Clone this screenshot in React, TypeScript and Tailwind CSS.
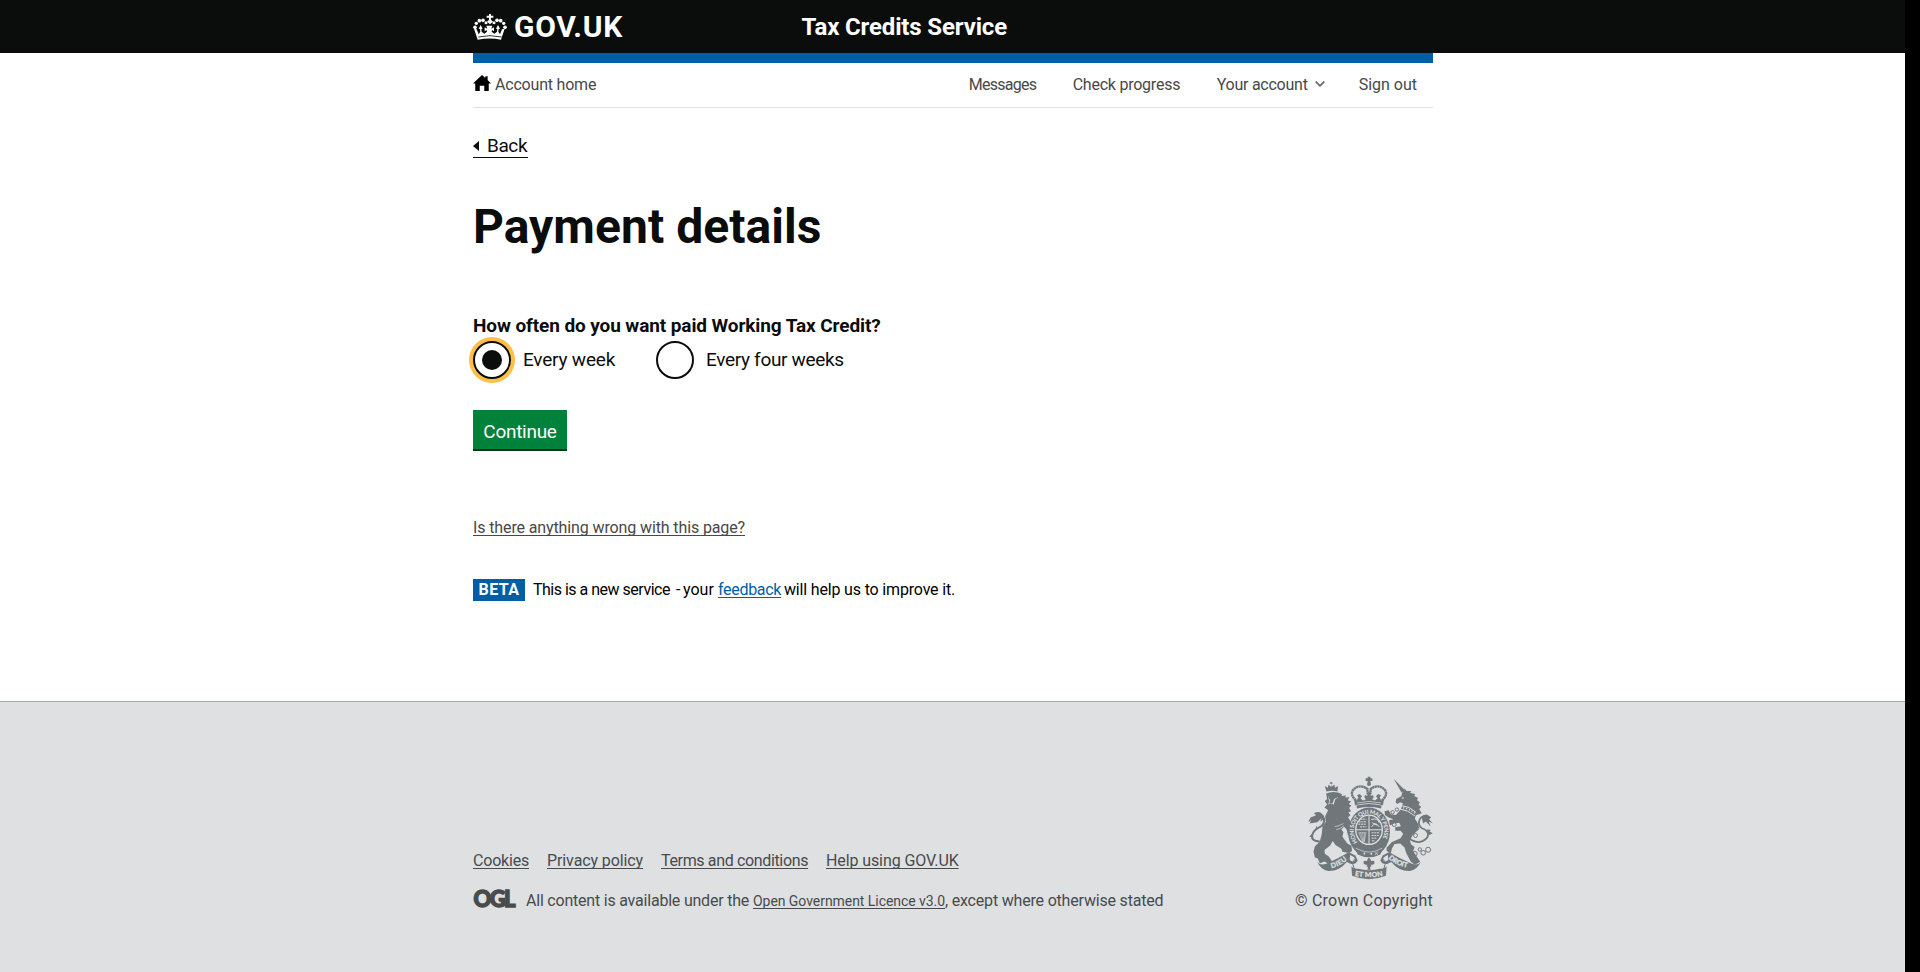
import React from "react";

const link =
  "underline decoration-1 underline-offset-[2px] [text-decoration-skip-ink:none]";

function Crown() {
  const dots: [number, number, number][] = [
    [6, 40, 5.5],
    [10, 28, 5],
    [19, 20, 5.5],
    [30, 19, 5.5],
    [39, 26, 4.5],
  ];
  return (
    <svg viewBox="0 0 102 78" className="block h-[26px] w-[34px] shrink-0" fill="#fff">
      {dots.map(([x, y, r]) => (
        <g key={x}>
          <circle cx={x} cy={y} r={r} />
          <circle cx={102 - x} cy={y} r={r} />
        </g>
      ))}
      <path d="M48 0h6v5h7v6h-7v6l6 6-9 8-9-8 6-6v-6h-7V5h7z" />
      <path d="M3 44l8 2 6 15 5-8-1-8-4-1 6-11 6 11-4 1 1 8 8 6 8-6-1-5-6 4v-12l8 4-3-9h18l-3 9 8-4v12l-6-4-1 5 8 6 8-6 1-8-4-1 6-11 6 11-4 1-1 8 5 8 6-15 8-2-11 33Q51 70 14 77z" />
      <path d="M16 69Q51 61 86 69" fill="none" stroke="#0b0c0c" strokeWidth="2.5" />
    </svg>
  );
}

function Crest() {
  const bg = "#dee0e2";
  const ink = "#6f777b";
  return (
    <svg
      viewBox="84 36 375 307"
      className="block h-[102px] w-[125px] overflow-visible"
      fill={ink}
      fontFamily="Lato, sans-serif"
      fontWeight="900"
    >
      {/* lion */}
      <path d="M139 80l-5-17 9 5 2-9 8 6v-8l-5-2 5-5 5 5-4 2v8l9-6 2 9 9-5-2 17q-17-5-33 0z" />
      <path d="M138 86Q155 78 174 83L186 88 184 93 198 92 195 98 208 97 203 106 213 110 206 117 214 122 207 129 213 139 205 142 211 151 204 157 214 174 222 190 224 203 214 200 216 212 203 210 200 195 192 186 184 194 190 202 187 216 202 236 214 243 216 259 207 265 187 261 184 252 166 241 158 229 150 242 133 256 134 267 146 275 156 290 145 296 132 290 119 296 113 281 104 278 100 260 104 245 119 230 125 207 127 185 137 171 135 154 144 136 133 128 141 119 134 108 141 102z" />
      <path d="M143 95l10 3 4 6 7-6 11-2-10 8-4 15-10-3-8 3 5-9z" fill={bg} />
      <path d="M144 97q7-5 13 3l9-6 7 3-11 5-5 14-9 0 2-11z" />
      <path d="M190 176q-15 9-26 9m27-2q-9 9-23 12" fill="none" stroke={bg} strokeWidth="2" />
      <path d="M119 230Q92 229 96 211 100 195 124 184 139 169 126 151" fill="none" stroke={ink} strokeWidth="6" />
      <path d="M130 153Q120 135 101 145L108 151 91 158 84 172 93 166 88 176 111 172 125 160 119 171 132 163z" />
      <path d="M96 207l-9 8 11 3zM111 190l-1-8-5 12z" />
      {/* unicorn */}
      <path d="M341 41l24 42 11-6z" />
      <path d="M367 83L375 71 380 78 394 78 391 84 406 87 403 93 415 99 411 105 420 112 416 119 424 126 418 132 426 145 408 151 405 162 417 180 413 197 397 213 390 228 394 239 404 247 400 259 409 273 421 291 405 300 393 291 379 265 374 248 361 236 344 238 336 251 333 265 320 259 320 249 336 232 362 220 370 207 362 198 346 198 346 187 363 184 358 174 344 175 330 182 327 166 341 163 326 158 315 150 314 139 326 136 333 148 348 150 356 141 363 132 369 115 360 112 353 117 347 112 349 102 364 94z" />
      <path d="M359 132q25 3 46 21m-42-31q25 1 45 20" fill="none" stroke={bg} strokeWidth="3" />
      <path d="M361 128q25 1 46 18" fill="none" stroke={bg} strokeWidth="5" strokeDasharray="3 6" />
      <path d="M364 99l8-3-2 6z" fill={bg} />
      <path d="M388 222Q409 237 428 229 448 220 444 205 441 195 426 190 412 180 420 163 427 151 438 154" fill="none" stroke={ink} strokeWidth="5" />
      <path d="M427 164Q423 150 441 149L454 157 448 163 459 176 447 170 452 185 438 170 430 176z" />
      <path d="M441 194l12 1-4 5 10 5-12 6z" />
      <g fill="none" stroke={ink} strokeWidth="3">
        <circle cx="351" cy="134" r="5" />
        <circle cx="338" cy="142" r="5" />
        <circle cx="343" cy="179" r="6" />
        <circle cx="411" cy="190" r="6" />
        <circle cx="407" cy="212" r="6" />
        <circle cx="390" cy="254" r="6" />
        <circle cx="405" cy="267" r="7" />
        <circle cx="420" cy="254" r="5" />
        <circle cx="430" cy="264" r="7" />
        <circle cx="445" cy="255" r="7.5" />
      </g>
      {/* royal crown */}
      <circle cx="267" cy="57" r="6" />
      <path d="M263 35h8v5h6v8h-6v5h-8v-5h-6v-8h6z" />
      <path d="M228 107Q208 88 220 74 239 55 262 72L263 88M306 107Q326 88 314 74 295 55 272 72L271 88" fill="none" stroke={ink} strokeWidth="7" strokeDasharray="7 1" />
      <path d="M225 121l-3-18 8 4 5-9-4-7 8-4 7 7-5 6 8 7 9-4-5-5 2-8 7 3v-8l5-5 5 5v8l7-3 2 8-5 5 9 4 8-7-5-6 7-7 8 4-4 7 5 9 8-4-3 18q-42-12-84 0z" />
      <path d="M231 114q36-9 72 0" fill="none" stroke={bg} strokeWidth="2" />
      <path d="M229 122q38-10 76 0l-2 9q-36-9-72 0z" />
      {/* garter and shield */}
      <ellipse cx="267" cy="202" rx="63" ry="74" />
      <ellipse cx="267" cy="195" rx="42" ry="46" fill={bg} />
      <ellipse cx="267" cy="195" rx="38" ry="42" />
      <path id="garter-arc" d="M233 232A46 51 0 1 1 301 232" fill="none" />
      <text fontSize="17" fill={bg}>
        <textPath href="#garter-arc" textLength="212">HONI SOIT QUI MAL Y PENSE</textPath>
      </text>
      <path d="M267 151v88M228 195h78" stroke={bg} strokeWidth="3" />
      <path d="M236 171h23m-24 7h24m-18-15h18m-19 23h19m16 18h23m-23 8h21m-21 8h16m-15 8h9" stroke={bg} strokeWidth="3" strokeDasharray="6 2" />
      <path d="M274 164q20-6 24 10m-23 12q11-18 23 0m-21-12l15 7" fill="none" stroke={bg} strokeWidth="3" />
      <path d="M236 202l12 30m-7-30l9 30m-3-30l5 30m1-30l0 30m5-30l-5 27M236 204h22" stroke={bg} strokeWidth="1.6" />
      <path d="M225 252q42 24 84 0l-8 17q-34 17-68 0z" />
      <path d="M227 250q40 24 80 0" fill="none" stroke={bg} strokeWidth="2" />
      <circle cx="253" cy="266" r="3" fill={bg} />
      <circle cx="274" cy="267" r="3" fill={bg} />
      <path d="M284 262l10 8m0-10l-9 11" stroke={bg} strokeWidth="2" />
      {/* motto ribbon */}
      <path d="M111 291Q120 304 138 297 180 279 206 262L226 272 233 287Q227 300 211 297L200 292Q178 320 144 319 122 315 111 291z" />
      <path d="M423 291Q414 304 396 297 354 279 328 262L308 272 301 287Q307 300 323 297L334 292Q356 320 390 319 412 315 423 291z" />
      <path d="M210 271Q228 278 224 288 218 293 209 286M324 271Q306 278 310 288 316 293 325 286" fill={bg} />
      <path d="M214 305Q219 313 234 312 267 321 300 312 315 313 320 305L318 333Q267 354 216 333z" />
      <path d="M223 283Q214 300 223 314M311 283Q320 300 311 314" fill="none" stroke={ink} strokeWidth="3" />
      <path id="ribbon-left" d="M154 310Q182 305 204 282" fill="none" />
      <path id="ribbon-mid" d="M224 333Q267 342 311 333" fill="none" />
      <path id="ribbon-right" d="M325 281Q350 305 386 309" fill="none" />
      <g fontSize="21" fill={bg} stroke={bg} strokeWidth="0.6">
        <text><textPath href="#ribbon-left" textLength="54">DIEU</textPath></text>
        <text><textPath href="#ribbon-mid" textLength="85">ET MON</textPath></text>
        <text><textPath href="#ribbon-right" textLength="64">DROIT</textPath></text>
      </g>
      {/* fleur */}
      <path d="M267 278q11 11 3 19 1-12 12-8 5 9-5 11h-5l3 5-5 2 2 8h-10l2-8-5-2 3-5h-5q-10-2-5-11 11-4 12 8-8-8 3-19z" />
    </svg>
  );
}

function Header() {
  return (
    <header className="flex h-[53px] shrink-0 bg-[#0b0c0c] pl-[473px] text-white">
      <div className="flex w-[960px] items-center">
        <a className="flex w-[328.5px] shrink-0 items-center">
          <Crown />
          <span className="ml-[7px] text-[30px] leading-[30px] font-bold tracking-[0.7px]">
            GOV.UK
          </span>
        </a>
        <span className="text-[24px] leading-[30px] font-bold tracking-[-0.15px] whitespace-nowrap">
          Tax Credits Service
        </span>
      </div>
    </header>
  );
}

function AccountNav() {
  return (
    <nav className="flex h-[55px] items-center border-t-[10px] border-b border-t-[#005ea5] border-b-[#dee0e2] text-[16px] whitespace-nowrap text-[#484848]">
      <svg viewBox="0 0 16 15" preserveAspectRatio="none" className="mb-1 h-4 w-[18px]" fill="#000">
        <path d="M8 0l3 2.8V1.2h2v3.5L16 8h-2v7h-4v-5H6v5H2V8H0z" />
      </svg>
      <span className="ml-1 tracking-[-0.2px]">Account home</span>
      <div className="mr-4 ml-auto flex items-center">
        <span className="w-[104px] tracking-[-0.72px]">Messages</span>
        <span className="w-[144px] tracking-[-0.23px]">Check progress</span>
        <span className="flex w-[142px] items-center tracking-[-0.24px]">
          Your account
          <svg viewBox="0 0 10 6" className="mb-[3px] ml-[7px] h-[6px] w-[10px]" fill="none" stroke="#6b6b6b" strokeWidth="1.8">
            <path d="M.7.7L5 4.8 9.3.7" />
          </svg>
        </span>
        <span>Sign out</span>
      </div>
    </nav>
  );
}

function Radio({ label, checked, tracking, className }: { label: string; checked?: boolean; tracking: string; className: string }) {
  return (
    <label className={`flex items-center ${className}`}>
      <span
        className={`flex size-[38px] items-center justify-center rounded-full border-2 border-[#0b0c0c] bg-white ${
          checked ? "shadow-[0_0_0_4px_#ffbf47]" : ""
        }`}
      >
        {checked && <span className="size-5 rounded-full bg-[#0b0c0c]" />}
      </span>
      <span className={`mb-[2px] ml-3 text-[19px] leading-[25px] whitespace-nowrap ${tracking}`}>{label}</span>
    </label>
  );
}

function Footer() {
  return (
    <footer className="flex grow border-t border-[#a1acb2] bg-[#dee0e2] pt-[75px] pl-[473px] text-[16px] leading-5 whitespace-nowrap text-[#484b4d]">
      <div className="flex h-[134px] w-[960px] items-end justify-between">
        <div>
          <div className="flex">
            <span className="w-[74px]"><a className={`tracking-[-0.2px] ${link}`}>Cookies</a></span>
            <span className="w-[114px]"><a className={`tracking-[-0.1px] ${link}`}>Privacy policy</a></span>
            <span className="w-[165px]"><a className={`tracking-[-0.35px] ${link}`}>Terms and conditions</a></span>
            <a className={`tracking-[-0.1px] ${link}`}>Help using GOV.UK</a>
          </div>
          <div className="mt-5 flex">
            <svg viewBox="0 0 43 18" className="mt-[-1px] h-[18px] w-[43px] overflow-visible" fill="#484b4d" stroke="#484b4d" strokeWidth="1.4">
              <text x="0.5" y="16.5" fontFamily="Lato, sans-serif" fontWeight="900" fontSize="22" textLength="42" lengthAdjust="spacing">OGL</text>
            </svg>
            <p className="ml-[10px] flex items-baseline">
              <span className="w-[227px] tracking-[-0.21px]">All content is available under the</span>
              <a className={`w-[192px] text-[14px] tracking-[-0.05px] ${link}`}>Open Government Licence v3.0</a>
              <span className="tracking-[-0.19px]">, except where otherwise stated</span>
            </p>
          </div>
        </div>
        <div className="flex flex-col items-end">
          <Crest />
          <span className="mt-3 tracking-[0.2px]">© Crown Copyright</span>
        </div>
      </div>
    </footer>
  );
}

export default function App() {
  return (
    <div className="flex h-[972px] w-[1920px] bg-black font-['Roboto','Liberation_Sans',sans-serif]">
      <div className="flex w-[1905px] flex-col bg-white text-[#0b0c0c]">
        <Header />
        <main className="ml-[473px] h-[648px] w-[960px] shrink-0">
          <AccountNav />
          <a className="mt-[26px] flex h-6 w-[55px] items-center border-b border-[#0b0c0c] text-[19px] leading-[23px]">
            <svg viewBox="0 0 5 10" className="h-[10px] w-[6px]" preserveAspectRatio="none" fill="#0b0c0c">
              <path d="M5 0v10L0 5z" />
            </svg>
            <span className="ml-2 tracking-[-0.4px]">Back</span>
          </a>
          <h1 className="mt-11 text-[48px] leading-[50px] font-bold tracking-[0.05px]">Payment details</h1>
          <h2 className="mt-[61px] text-[19px] leading-[25px] font-bold tracking-[-0.1px]">
            How often do you want paid Working Tax Credit?
          </h2>
          <div className="mt-[3px] flex">
            <Radio label="Every week" checked tracking="tracking-[-0.2px]" className="w-[183px]" />
            <Radio label="Every four weeks" tracking="tracking-[-0.32px]" className="" />
          </div>
          <button className="mt-[31px] block h-[39px] w-[94px] bg-[#00823b] pt-1 text-[19px] leading-[35px] tracking-[-0.28px] text-white shadow-[0_2px_0_#003618]">
            Continue
          </button>
          <div className="mt-[69px] text-[16px] leading-[19px] text-[#484848]">
            <a className={`tracking-[-0.12px] ${link}`}>Is there anything wrong with this page?</a>
          </div>
          <div className="mt-[42px] flex h-[22px] items-center text-[16px] leading-5 whitespace-nowrap text-black">
            <strong className="flex h-[22px] w-[52px] items-center justify-center bg-[#005ea5] tracking-[0.45px] text-white">
              BETA
            </strong>
            <span className="ml-2 w-[143px] tracking-[-0.5px]">This is a new service</span>
            <span className="w-[7px]">-</span>
            <span className="w-[35px]">your</span>
            <a className={`mr-[3px] w-[63px] tracking-[-0.3px] text-[#005ea5] ${link}`}>feedback</a>
            <span className="tracking-[-0.17px]">will help us to improve it.</span>
          </div>
        </main>
        <Footer />
      </div>
    </div>
  );
}
